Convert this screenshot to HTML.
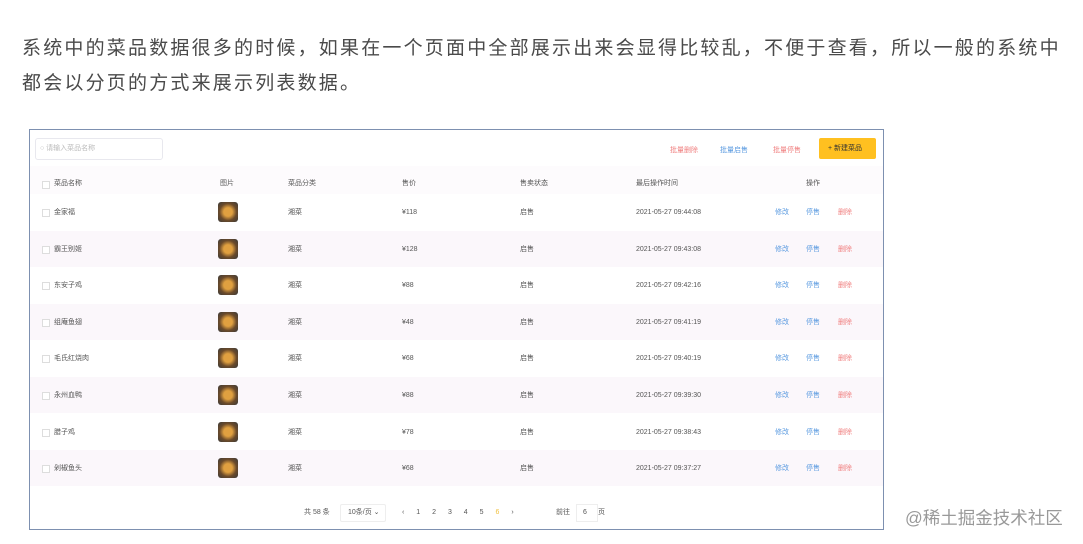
<!DOCTYPE html>
<html><head><meta charset="utf-8"><style>
body{margin:0;width:1083px;height:544px;background:#fff;position:relative;overflow:hidden;font-family:"Liberation Sans","Noto Sans CJK SC",sans-serif}
.p{position:absolute;left:22px;font-size:19px;letter-spacing:2.2px;color:#4a4a4a;white-space:nowrap;line-height:22px}
.frame{position:absolute;left:29px;top:129px;width:853px;height:399px;border:1.5px solid #7d90b0;background:#fff}
.a{position:absolute;font-size:7px;color:#555;white-space:nowrap;line-height:10px}
.row{position:absolute;left:0;width:853px;height:36px}
.cb{position:absolute;left:12px;width:6px;height:6px;border:1px solid #ddd;background:#fff}
.img{position:absolute;left:188px;width:20px;height:20px;border-radius:3px;background:radial-gradient(circle,#e0a040 30%,#6b4a2a 60%,#3a3a3a 100%)}
</style></head><body>
<div class="p" style="top:38px">系统中的菜品数据很多的时候，如果在一个页面中全部展示出来会显得比较乱，不便于查看，所以一般的系统中</div>
<div class="p" style="top:73px">都会以分页的方式来展示列表数据。</div>
<div class="frame">
<div style="position:absolute;left:5px;top:8px;width:126px;height:20px;border:1px solid #e8e8ee;border-radius:3px"></div>
<div class="a" style="left:10px;top:14px;color:#bbb">○ 请输入菜品名称</div>
<div class="a" style="left:640px;top:16px;color:#f08080">批量删除</div>
<div class="a" style="left:690px;top:16px;color:#5a9ae0">批量启售</div>
<div class="a" style="left:743px;top:16px;color:#f08080">批量停售</div>
<div style="position:absolute;left:789px;top:8px;width:57px;height:21px;background:#ffc020;border-radius:2px"></div>
<div class="a" style="left:798px;top:14px;color:#333">+ 新建菜品</div>
<div class="row" style="top:36px;background:#fdfbfd"></div>
<div class="cb" style="top:51px"></div>
<div class="a" style="left:24px;top:49px">菜品名称</div><div class="a" style="left:190px;top:49px">图片</div><div class="a" style="left:258px;top:49px">菜品分类</div><div class="a" style="left:372px;top:49px">售价</div><div class="a" style="left:490px;top:49px">售卖状态</div><div class="a" style="left:606px;top:49px">最后操作时间</div><div class="a" style="left:776px;top:49px">操作</div>
<div id="rows"></div>
<div class="a" style="left:274px;top:378px">共 58 条</div>
<div style="position:absolute;left:310px;top:374px;width:44px;height:16px;border:1px solid #eee;border-radius:2px"></div>
<div class="a" style="left:318px;top:378px">10条/页 ⌄</div>
<div class="a" style="left:372px;top:378px;word-spacing:10px;letter-spacing:0">‹ 1 2 3 4 5 <span style="color:#f0c040">6</span> ›</div>
<div class="a" style="left:526px;top:378px">前往</div>
<div style="position:absolute;left:546px;top:374px;width:20px;height:16px;border:1px solid #eee"></div>
<div class="a" style="left:553px;top:378px">6</div><div class="a" style="left:568px;top:378px">页</div>
</div>
<div style="position:absolute;left:905px;top:505px;font-size:17.5px;color:#999;font-family:'Liberation Sans','Noto Sans CJK SC',sans-serif">@稀土掘金技术社区</div>
<script>
var d=[["金家福","¥118","09:44:08"],["霸王别姬","¥128","09:43:08"],["东安子鸡","¥88","09:42:16"],["组庵鱼翅","¥48","09:41:19"],["毛氏红烧肉","¥68","09:40:19"],["永州血鸭","¥88","09:39:30"],["腊子鸡","¥78","09:38:43"],["剁椒鱼头","¥68","09:37:27"]];
var h="";d.forEach(function(r,i){var t=66+i*36.6;
h+='<div class="row" style="top:'+(t-2)+'px;background:'+(i%2?'#fbf7fb':'#fff')+'"></div>';
h+='<div class="cb" style="top:'+(t+13)+'px"></div><div class="a" style="left:24px;top:'+(t+12)+'px">'+r[0]+'</div>';
h+='<div class="img" style="top:'+(t+6)+'px"></div><div class="a" style="left:258px;top:'+(t+12)+'px">湘菜</div>';
h+='<div class="a" style="left:372px;top:'+(t+12)+'px">'+r[1]+'</div><div class="a" style="left:490px;top:'+(t+12)+'px">启售</div>';
h+='<div class="a" style="left:606px;top:'+(t+12)+'px">2021-05-27 '+r[2]+'</div>';
h+='<div class="a" style="left:745px;top:'+(t+12)+'px;color:#5a9ae0">修改</div><div class="a" style="left:776px;top:'+(t+12)+'px;color:#5a9ae0">停售</div><div class="a" style="left:808px;top:'+(t+12)+'px;color:#f08080">删除</div>';});
document.getElementById("rows").outerHTML=h;
</script>
</body></html>
